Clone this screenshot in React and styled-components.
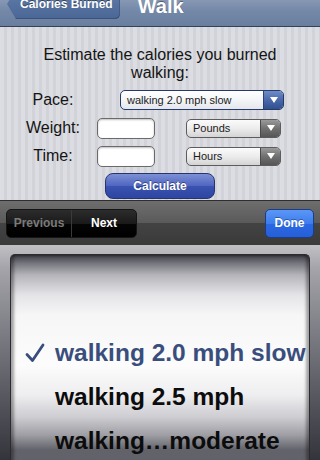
import React from 'react';
import styled, { createGlobalStyle } from 'styled-components';

const GlobalStyle = createGlobalStyle`
  html, body {
    margin: 0;
    padding: 0;
    background: #000;
  }
  body {
    font-family: 'Liberation Sans', Arial, sans-serif;
    -webkit-font-smoothing: antialiased;
  }
`;

const Screen = styled.div`
  width: 320px;
  height: 460px;
  overflow: hidden;
  display: flex;
  flex-direction: column;
`;

const NavBar = styled.div`
  height: 26px;
  flex-shrink: 0;
  display: flex;
  align-items: flex-end;
  padding-left: 7px;
  background: linear-gradient(#8798b4, #7488a8 40%, #6a7fa0);
  border-bottom: 1px solid #34425a;
`;

const BackButton = styled.div`
  height: 30px;
  margin-bottom: 7px;
  padding: 0 7px 0 13px;
  display: flex;
  align-items: center;
  flex-shrink: 0;
  color: #fff;
  font-size: 12px;
  font-weight: bold;
  text-shadow: 0 -1px 0 rgba(0, 0, 0, 0.45);
  border-radius: 0 5px 5px 0;
  background: linear-gradient(#6580ab, #54709e 55%, #4a6796);
  box-shadow: inset -1px 0 0 #3b5278, inset 0 -1px 0 #3b5278;
  clip-path: polygon(0 50%, 9px 0, 100% 0, 100% 100%, 9px 100%);
`;

const NavTitle = styled.div`
  margin: 0 0 8px 18px;
  line-height: 24px;
  color: #fff;
  font-size: 20px;
  font-weight: bold;
  text-shadow: 0 -1px 0 rgba(0, 0, 0, 0.4);
`;

const Form = styled.div`
  height: 173px;
  flex-shrink: 0;
  box-sizing: border-box;
  padding-top: 19px;
  display: flex;
  flex-direction: column;
  align-items: center;
  background: repeating-linear-gradient(
    90deg,
    #dcdde2 0px,
    #dcdde2 4px,
    #d1d3d8 4px,
    #d1d3d8 7px
  );
`;

const Prompt = styled.div`
  width: 100%;
  text-align: center;
  font-size: 16px;
  line-height: 18px;
  color: #141414;
`;

const Fields = styled.div`
  width: 100%;
  margin-top: 4px;
  display: flex;
  flex-direction: column;
`;

const FieldRow = styled.div`
  height: 28px;
  display: flex;
  align-items: center;
  padding-left: 20px;
`;

const FieldLabel = styled.div`
  width: 66px;
  flex-shrink: 0;
  text-align: center;
  font-size: 16px;
  color: #141414;
`;

const TextBox = styled.div`
  width: 58px;
  height: 21px;
  margin-left: 11px;
  box-sizing: border-box;
  border: 1px solid #6a6a6a;
  border-radius: 5px;
  background: #fff;
  box-shadow: inset 0 1px 2px rgba(0, 0, 0, 0.25);
`;

const Dropdown = styled.div`
  width: ${({ $width }) => $width}px;
  height: ${({ $tone }) => ($tone === 'blue' ? 20 : 19)}px;
  margin-left: ${({ $offset }) => $offset}px;
  box-sizing: border-box;
  display: flex;
  border-radius: 5px;
  overflow: hidden;
  border: 1px solid ${({ $tone }) => ($tone === 'blue' ? '#243a6a' : '#5c5c5c')};
  background: ${({ $tone }) =>
    $tone === 'blue'
      ? 'linear-gradient(#ffffff, #f4f5f8 50%, #e4e6ec)'
      : 'linear-gradient(#fbfbfb, #ececec 50%, #d4d4d4)'};
`;

const DropdownValue = styled.div`
  flex: 1;
  display: flex;
  align-items: center;
  padding-left: ${({ $pad }) => $pad}px;
  font-size: 11px;
  color: #1a1a1a;
  white-space: nowrap;
`;

const DropdownArrow = styled.div`
  width: 19px;
  display: flex;
  align-items: center;
  justify-content: center;
  border-left: 1px solid ${({ $tone }) => ($tone === 'blue' ? '#2a4278' : '#4a4a4a')};
  background: ${({ $tone }) =>
    $tone === 'blue'
      ? 'linear-gradient(#6f8cc8, #4a68aa 50%, #31508f)'
      : 'linear-gradient(#9a9a9a, #707070 50%, #555)'};
`;

const CalcButton = styled.div`
  width: 110px;
  height: 26px;
  margin-top: 3px;
  box-sizing: border-box;
  display: flex;
  align-items: center;
  justify-content: center;
  border-radius: 8px;
  border: 1px solid #27356f;
  background: linear-gradient(#7d90d6, #5167c0 48%, #3a52b0 52%, #2e45a2);
  color: #fff;
  font-size: 12px;
  font-weight: bold;
  text-shadow: 0 -1px 0 rgba(0, 0, 0, 0.4);
`;

const Toolbar = styled.div`
  height: 44px;
  flex-shrink: 0;
  border-top: 1px solid #2e2e2e;
  display: flex;
  align-items: center;
  justify-content: space-between;
  padding: 0 6px;
  background: linear-gradient(#6e6e6e, #5a5a5a 50%, #434343 51%, #3a3a3a);
`;

const Segmented = styled.div`
  width: 131px;
  height: 29px;
  box-sizing: border-box;
  display: flex;
  border-radius: 5px;
  border: 1px solid #151515;
  overflow: hidden;
  background: linear-gradient(#2c2c2c, #1a1a1a 50%, #050505 51%, #000);
`;

const Segment = styled.div`
  flex: 1;
  display: flex;
  align-items: center;
  justify-content: center;
  font-size: 12px;
  font-weight: bold;
  color: ${({ $active }) => ($active ? '#fff' : '#7a7a7a')};
  & + & {
    border-left: 1px solid #3a3a3a;
  }
`;

const DoneButton = styled.div`
  width: 49px;
  height: 29px;
  box-sizing: border-box;
  display: flex;
  align-items: center;
  justify-content: center;
  border-radius: 5px;
  border: 1px solid #1c3d84;
  background: linear-gradient(#5c97f6, #3c7cee 50%, #2a68e4 51%, #2660d8);
  color: #fff;
  font-size: 12px;
  font-weight: bold;
  text-shadow: 0 -1px 0 rgba(0, 0, 0, 0.35);
`;

const PickerFrame = styled.div`
  flex: 1;
  padding: 9px 10px 11px;
  display: flex;
  background: linear-gradient(#c0c0c5, #a4a4aa 10%, #7a7a82 40%, #4c4c54 75%, #2c2c33);
`;

const PickerWheel = styled.div`
  flex: 1;
  overflow: hidden;
  border-radius: 5px 5px 0 0;
  border: 1px solid #2a2a30;
  border-bottom: none;
  background: linear-gradient(
    #3c3c44 0px,
    #74747c 8px,
    #b4b4ba 20px,
    #e4e4e8 40px,
    #f6f6f7 60px,
    #fcfcfc 110px,
    #eeeef0 140px,
    #cdcdd2 162px,
    #9e9ea4 180px,
    #62626a 195px
  );
  box-shadow: inset 3px 0 3px rgba(0, 0, 0, 0.35), inset -3px 0 3px rgba(0, 0, 0, 0.35);
`;

const PickerList = styled.div`
  padding-top: 76px;
`;

const PickerRow = styled.div`
  height: 44px;
  display: flex;
  align-items: center;
  padding-left: 14px;
  font-size: 24.5px;
  font-weight: bold;
  line-height: 44px;
  white-space: nowrap;
  color: ${({ $selected }) => ($selected ? '#394e7c' : '#0c0c0c')};
`;

const CheckSlot = styled.div`
  width: 30px;
  flex-shrink: 0;
  display: flex;
  align-items: center;
`;

const Arrow = () => (
  <svg width="8" height="6" viewBox="0 0 8 6">
    <polygon points="0,0 8,0 4,6" fill="#fff" />
  </svg>
);

const Check = () => (
  <svg width="20" height="20" viewBox="0 0 20 20">
    <path
      d="M2 11.5 L7.5 17.5 L18 2"
      fill="none"
      stroke="#394e7c"
      strokeWidth="2.8"
      strokeLinecap="round"
      strokeLinejoin="round"
    />
  </svg>
);

const paces = ['walking 2.0 mph slow', 'walking 2.5 mph', 'walking\u2026moderate'];

export default function App() {
  return (
    <>
      <GlobalStyle />
      <Screen>
        <NavBar>
          <BackButton>Calories Burned</BackButton>
          <NavTitle>Walk</NavTitle>
        </NavBar>

        <Form>
          <Prompt>
            Estimate the calories you burned
            <br />
            walking:
          </Prompt>
          <Fields>
            <FieldRow>
              <FieldLabel>Pace:</FieldLabel>
              <Dropdown $tone="blue" $width={164} $offset={34}>
                <DropdownValue $pad={6}>walking 2.0 mph slow</DropdownValue>
                <DropdownArrow $tone="blue">
                  <Arrow />
                </DropdownArrow>
              </Dropdown>
            </FieldRow>
            <FieldRow>
              <FieldLabel>Weight:</FieldLabel>
              <TextBox />
              <Dropdown $tone="gray" $width={95} $offset={31}>
                <DropdownValue $pad={6}>Pounds</DropdownValue>
                <DropdownArrow $tone="gray">
                  <Arrow />
                </DropdownArrow>
              </Dropdown>
            </FieldRow>
            <FieldRow>
              <FieldLabel>Time:</FieldLabel>
              <TextBox />
              <Dropdown $tone="gray" $width={95} $offset={31}>
                <DropdownValue $pad={6}>Hours</DropdownValue>
                <DropdownArrow $tone="gray">
                  <Arrow />
                </DropdownArrow>
              </Dropdown>
            </FieldRow>
          </Fields>
          <CalcButton>Calculate</CalcButton>
        </Form>

        <Toolbar>
          <Segmented>
            <Segment>Previous</Segment>
            <Segment $active>Next</Segment>
          </Segmented>
          <DoneButton>Done</DoneButton>
        </Toolbar>

        <PickerFrame>
          <PickerWheel>
            <PickerList>
              {paces.map((p, i) => (
                <PickerRow key={p} $selected={i === 0}>
                  <CheckSlot>{i === 0 && <Check />}</CheckSlot>
                  {p}
                </PickerRow>
              ))}
            </PickerList>
          </PickerWheel>
        </PickerFrame>
      </Screen>
    </>
  );
}
